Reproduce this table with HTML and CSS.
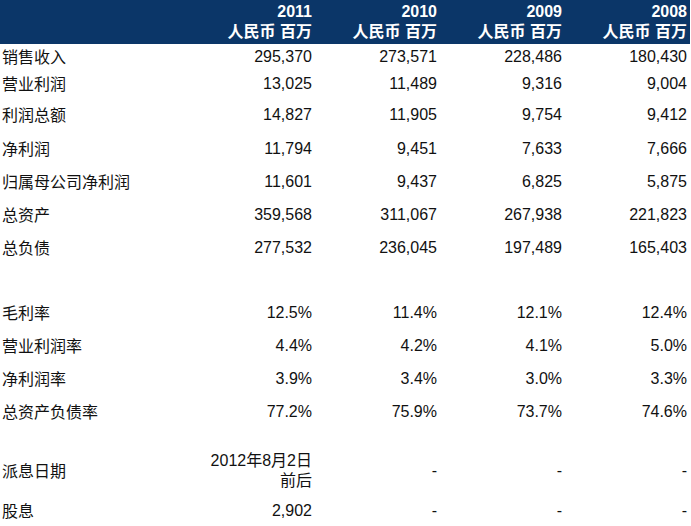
FILE: index.html
```html
<!DOCTYPE html>
<html lang="zh">
<head>
<meta charset="utf-8">
<link rel="stylesheet" href="styles.css">
</head>
<body>
<div class="sheet">
  <div class="row head">
    <div class="cell label"></div>
    <div class="cell num"><span>2011</span><span>人民币 百万</span></div>
    <div class="cell num"><span>2010</span><span>人民币 百万</span></div>
    <div class="cell num"><span>2009</span><span>人民币 百万</span></div>
    <div class="cell num"><span>2008</span><span>人民币 百万</span></div>
  </div>
  <div class="row h26">
    <div class="cell label">销售收入</div>
    <div class="cell num">295,370</div><div class="cell num">273,571</div><div class="cell num">228,486</div><div class="cell num">180,430</div>
  </div>
  <div class="row h28">
    <div class="cell label">营业利润</div>
    <div class="cell num">13,025</div><div class="cell num">11,489</div><div class="cell num">9,316</div><div class="cell num">9,004</div>
  </div>
  <div class="row h34">
    <div class="cell label">利润总额</div>
    <div class="cell num">14,827</div><div class="cell num">11,905</div><div class="cell num">9,754</div><div class="cell num">9,412</div>
  </div>
  <div class="row">
    <div class="cell label">净利润</div>
    <div class="cell num">11,794</div><div class="cell num">9,451</div><div class="cell num">7,633</div><div class="cell num">7,666</div>
  </div>
  <div class="row">
    <div class="cell label">归属母公司净利润</div>
    <div class="cell num">11,601</div><div class="cell num">9,437</div><div class="cell num">6,825</div><div class="cell num">5,875</div>
  </div>
  <div class="row">
    <div class="cell label">总资产</div>
    <div class="cell num">359,568</div><div class="cell num">311,067</div><div class="cell num">267,938</div><div class="cell num">221,823</div>
  </div>
  <div class="row">
    <div class="cell label">总负债</div>
    <div class="cell num">277,532</div><div class="cell num">236,045</div><div class="cell num">197,489</div><div class="cell num">165,403</div>
  </div>
  <div class="row h32"></div>
  <div class="row">
    <div class="cell label">毛利率</div>
    <div class="cell num">12.5%</div><div class="cell num">11.4%</div><div class="cell num">12.1%</div><div class="cell num">12.4%</div>
  </div>
  <div class="row">
    <div class="cell label">营业利润率</div>
    <div class="cell num">4.4%</div><div class="cell num">4.2%</div><div class="cell num">4.1%</div><div class="cell num">5.0%</div>
  </div>
  <div class="row">
    <div class="cell label">净利润率</div>
    <div class="cell num">3.9%</div><div class="cell num">3.4%</div><div class="cell num">3.0%</div><div class="cell num">3.3%</div>
  </div>
  <div class="row">
    <div class="cell label">总资产负债率</div>
    <div class="cell num">77.2%</div><div class="cell num">75.9%</div><div class="cell num">73.7%</div><div class="cell num">74.6%</div>
  </div>
  <div class="row h20"></div>
  <div class="row h46">
    <div class="cell label">派息日期</div>
    <div class="cell num"><span>2012年8月2日</span><span>前后</span></div>
    <div class="cell num">-</div><div class="cell num">-</div><div class="cell num">-</div>
  </div>
  <div class="row">
    <div class="cell label">股息</div>
    <div class="cell num">2,902</div><div class="cell num">-</div><div class="cell num">-</div><div class="cell num">-</div>
  </div>
</div>
</body>
</html>
```

FILE: styles.css
```css
html, body {
  margin: 0;
  padding: 0;
  background: #ffffff;
}
body {
  font-family: "Liberation Sans", Arial, "Noto Sans CJK SC", sans-serif;
  font-size: 16px;
  color: #111111;
}
.sheet {
  width: 690px;
}
.row {
  display: grid;
  grid-template-columns: 190px repeat(4, 125px);
  height: 33px;
  align-items: center;
}
.row.h26 { height: 26px; }
.row.h28 { height: 28px; }
.row.h32 { height: 32px; }
.row.h34 { height: 34px; }
.row.h20 { height: 20px; }
.row.h46 { height: 46px; }
.row.head {
  height: 44px;
  background: #0b3668;
  color: #ffffff;
  font-weight: bold;
  align-items: start;
}
.head .cell {
  padding-top: 2px;
}
.cell {
  line-height: 20px;
  white-space: nowrap;
}
.label {
  padding-left: 2px;
  font-family: "Noto Sans CJK SC", sans-serif;
  font-size: 16px;
  margin-top: -2px;
}
.num {
  text-align: right;
  padding-right: 3px;
  display: flex;
  flex-direction: column;
  align-items: flex-end;
}
```
